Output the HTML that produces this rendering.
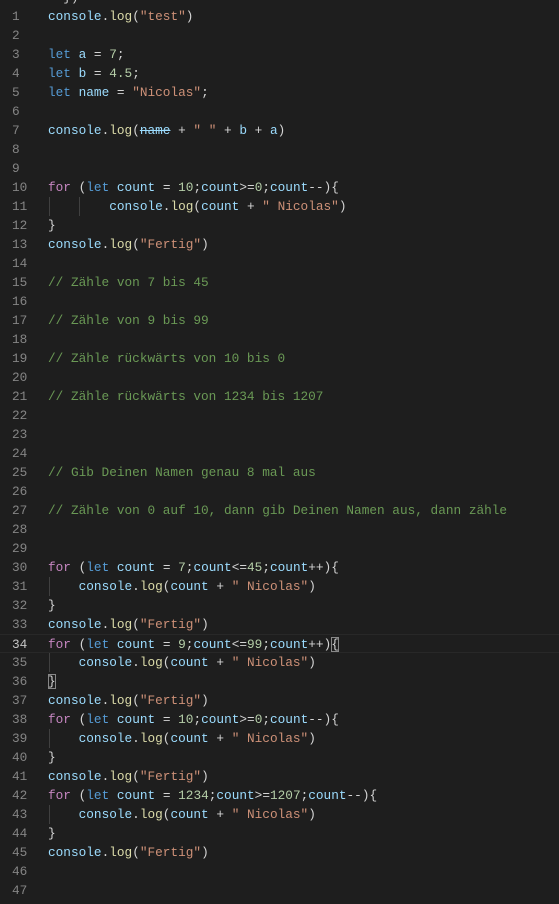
<!DOCTYPE html>
<html><head><meta charset="utf-8"><style>
html,body{margin:0;padding:0;background:#1e1e1e;width:559px;height:904px;overflow:hidden}
.l{position:absolute;left:0;height:19px;line-height:19px;font-family:"Liberation Mono",monospace;font-size:12.75px;white-space:pre;color:#d4d4d4;width:559px}
.n{position:absolute;left:12px;width:20px;color:#858585;text-align:left}
.c{position:absolute;left:48px}
.k{color:#569cd6}.f{color:#c586c0}.v{color:#9cdcfe}.m{color:#dcdcaa}.s{color:#ce9178}.d{color:#b5cea8}.g{color:#6a9955}
.gd{position:absolute;top:0;width:1px;height:19px;background:#404040}
.cur{border-top:1px solid #282828;border-bottom:1px solid #282828;box-sizing:border-box}
.bm{outline:1px solid #888;outline-offset:-1px}
</style></head><body>
<div class="l" style="top:-12px"><span class="c" style="left:48px">  })</span></div>
<div id="w"></div>
<script>
(function(){
var C='<span class="v">console</span>.<span class="m">log</span>';
var L=[
C+'(<span class="s">"test"</span>)','',
'<span class="k">let</span> <span class="v">a</span> = <span class="d">7</span>;',
'<span class="k">let</span> <span class="v">b</span> = <span class="d">4.5</span>;',
'<span class="k">let</span> <span class="v">name</span> = <span class="s">"Nicolas"</span>;','',
C+'(<span class="v" style="text-decoration:line-through">name</span> + <span class="s">" "</span> + <span class="v">b</span> + <span class="v">a</span>)','','',
'<span class="f">for</span> (<span class="k">let</span> <span class="v">count</span> = <span class="d">10</span>;<span class="v">count</span>&gt;=<span class="d">0</span>;<span class="v">count</span>--){',
'        '+C+'(<span class="v">count</span> + <span class="s">" Nicolas"</span>)',
'}',C+'(<span class="s">"Fertig"</span>)','',
'<span class="g">// Zähle von 7 bis 45</span>','',
'<span class="g">// Zähle von 9 bis 99</span>','',
'<span class="g">// Zähle rückwärts von 10 bis 0</span>','',
'<span class="g">// Zähle rückwärts von 1234 bis 1207</span>','','','',
'<span class="g">// Gib Deinen Namen genau 8 mal aus</span>','',
'<span class="g">// Zähle von 0 auf 10, dann gib Deinen Namen aus, dann zähle</span>','','',
'<span class="f">for</span> (<span class="k">let</span> <span class="v">count</span> = <span class="d">7</span>;<span class="v">count</span>&lt;=<span class="d">45</span>;<span class="v">count</span>++){',
'    '+C+'(<span class="v">count</span> + <span class="s">" Nicolas"</span>)','}',
C+'(<span class="s">"Fertig"</span>)',
'<span class="f">for</span> (<span class="k">let</span> <span class="v">count</span> = <span class="d">9</span>;<span class="v">count</span>&lt;=<span class="d">99</span>;<span class="v">count</span>++)<span class="bm">{</span>',
'    '+C+'(<span class="v">count</span> + <span class="s">" Nicolas"</span>)','<span class="bm">}</span>',
C+'(<span class="s">"Fertig"</span>)',
'<span class="f">for</span> (<span class="k">let</span> <span class="v">count</span> = <span class="d">10</span>;<span class="v">count</span>&gt;=<span class="d">0</span>;<span class="v">count</span>--){',
'    '+C+'(<span class="v">count</span> + <span class="s">" Nicolas"</span>)','}',
C+'(<span class="s">"Fertig"</span>)',
'<span class="f">for</span> (<span class="k">let</span> <span class="v">count</span> = <span class="d">1234</span>;<span class="v">count</span>&gt;=<span class="d">1207</span>;<span class="v">count</span>--){',
'    '+C+'(<span class="v">count</span> + <span class="s">" Nicolas"</span>)','}',
C+'(<span class="s">"Fertig"</span>)','',''];
var guides={11:[49,79],31:[49],35:[49],39:[49],43:[49]};
var h='';
for(var i=0;i<L.length;i++){var n=i+1;var tp=6.5+i*19;
var g='';(guides[n]||[]).forEach(function(x){g+='<span class="gd" style="left:'+x+'px"></span>'});
h+='<div class="l'+(n==34?' cur':'')+'" style="top:'+tp+'px"><span class="n" style="'+(n==34?'color:#c6c6c6':'')+'">'+n+'</span>'+g+'<span class="c">'+L[i]+'</span></div>';}
document.getElementById('w').innerHTML=h;
})();
</script>
</body></html>
